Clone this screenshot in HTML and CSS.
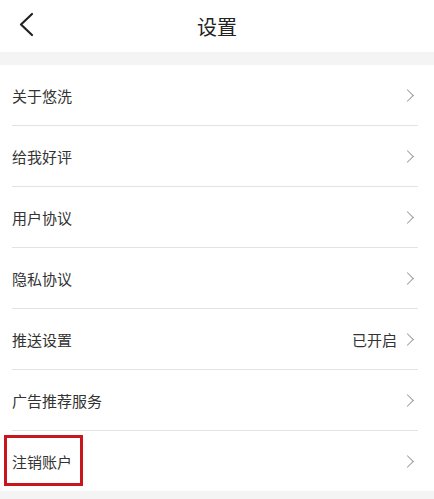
FILE: index.html
```html
<!DOCTYPE html>
<html lang="zh-CN">
<head>
<meta charset="utf-8">
<title>设置</title>
<link rel="stylesheet" href="styles.css">
</head>
<body>
<div class="page">
  <header class="topbar">
    <span class="back">
      <svg width="16" height="26" viewBox="0 0 16 26"><path d="M13 2 L2 12.5 L13 23" fill="none" stroke="#222" stroke-width="2.2" stroke-linecap="round" stroke-linejoin="round"/></svg>
    </span>
    <h1 class="title">设置</h1>
  </header>
  <div class="gap"></div>
  <ul class="list">
    <li class="row"><span class="label">关于悠洗</span><span class="right"><i class="chev"></i></span></li>
    <li class="row"><span class="label">给我好评</span><span class="right"><i class="chev"></i></span></li>
    <li class="row"><span class="label">用户协议</span><span class="right"><i class="chev"></i></span></li>
    <li class="row"><span class="label">隐私协议</span><span class="right"><i class="chev"></i></span></li>
    <li class="row"><span class="label">推送设置</span><span class="right"><span class="value">已开启</span><i class="chev"></i></span></li>
    <li class="row"><span class="label">广告推荐服务</span><span class="right"><i class="chev"></i></span></li>
    <li class="row last"><span class="label">注销账户</span><span class="right"><i class="chev"></i></span><span class="highlight"></span></li>
  </ul>
  <div class="gap bottom"></div>
</div>
</body>
</html>
```
FILE: styles.css
```css
* { box-sizing: border-box; }
html, body { margin: 0; padding: 0; background: #fff; }
body {
  font-family: "Noto Sans CJK SC", "Noto Sans", sans-serif;
  color: #333;
  width: 434px;
  height: 499px;
  overflow: hidden;
}
.page { display: flex; flex-direction: column; }
.topbar {
  position: relative;
  height: 52px;
  display: flex;
  align-items: center;
  justify-content: center;
}
.back {
  position: absolute;
  left: 19px;
  top: 12px;
  display: flex;
}
.title {
  margin: 0;
  font-size: 20px;
  font-weight: 400;
  color: #222;
  line-height: 1;
  padding-top: 1px;
}
.gap { height: 13px; background: #f4f4f4; }
.gap.bottom { height: 20px; }
.list { list-style: none; margin: 0; padding: 0 16px 0 12px; }
.row {
  position: relative;
  height: 61px;
  display: flex;
  align-items: center;
  justify-content: space-between;
  border-bottom: 1px solid #e3e3e3;
  font-size: 15px;
}
.row.last { border-bottom: none; height: 60px; }
.label { color: #333; }
.right { display: flex; align-items: center; gap: 6px; padding-right: 4px; }
.value { color: #333; font-size: 15px; }
.chev {
  display: block;
  width: 9px;
  height: 9px;
  border-top: 1.3px solid #9a9a9a;
  border-right: 1.3px solid #9a9a9a;
  transform: rotate(45deg);
  margin-right: 2px;
}
.highlight {
  position: absolute;
  left: -8px;
  top: 4px;
  width: 79px;
  height: 51px;
  border: 3px solid #c9161d;
}
```
